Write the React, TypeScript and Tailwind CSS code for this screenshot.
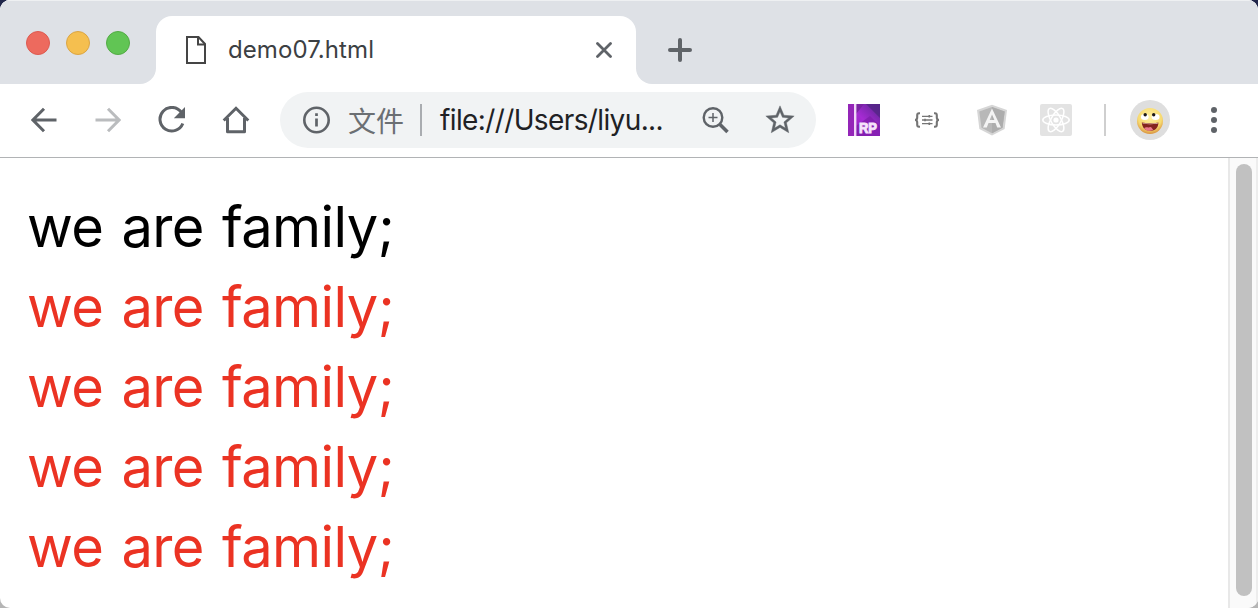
import type { ReactNode } from "react";

const INK = "#5f6368";

function Icon({ w, h, children }: { w: number; h: number; children: ReactNode }) {
  return (
    <svg width={w} height={h} viewBox={`0 0 ${w} ${h}`} fill="none" className="block shrink-0">
      {children}
    </svg>
  );
}

function TabStrip() {
  return (
    <div className="flex h-[84px] bg-white">
      <div className="flex w-[156px] items-start gap-4 rounded-br-2xl border-t border-[#eef0f2] bg-[#dee1e6] pt-[30px] pl-[26px]">
        <div className="size-6 rounded-full border border-[#dd5a50] bg-[#ed6a5e]" />
        <div className="size-6 rounded-full border border-[#dba544] bg-[#f5bf4f]" />
        <div className="size-6 rounded-full border border-[#53ab45] bg-[#61c554]" />
      </div>
      <div className="w-[480px] border-t border-[#eef0f2] bg-[#dee1e6] pt-[15px]">
        <div className="flex h-[68px] items-center rounded-t-2xl bg-white pl-[30px]">
          <Icon w={20} h={28}>
            <path d="M1 1H12.5L19 8V27H1Z" stroke="#454545" strokeWidth="2" />
            <path d="M12 1V8.5H19" stroke="#454545" strokeWidth="2" />
          </Icon>
          <span className="ml-[22px] w-[368px] font-[Inter,sans-serif] text-[24px] leading-[30px] tracking-[0.08px] text-[#3c4043]">
            demo07.html
          </span>
          <Icon w={16} h={16}>
            <path d="M1.5 1.5L14.5 14.5M14.5 1.5L1.5 14.5" stroke={INK} strokeWidth="2.8" strokeLinecap="round" />
          </Icon>
        </div>
      </div>
      <div className="flex-1 rounded-bl-2xl border-t border-[#eef0f2] bg-[#dee1e6] pt-[37px] pl-8">
        <Icon w={24} h={24}>
          <path d="M12 2V22M2 12H22" stroke={INK} strokeWidth="4" strokeLinecap="round" />
        </Icon>
      </div>
    </div>
  );
}

function AddressBar() {
  return (
    <div className="ml-[30px] flex h-14 w-[536px] items-center rounded-full bg-[#f1f3f4] pl-[23px]">
      <Icon w={27} h={28}>
        <circle cx="13.5" cy="14" r="12.2" stroke={INK} strokeWidth="2.6" />
        <path d="M13.5 7.3V10M13.5 12.5V20.5" stroke={INK} strokeWidth="2.7" />
      </Icon>
      <span className="ml-[18px] w-[72px] font-['Noto_Sans_CJK_SC',sans-serif] text-[28px] leading-[40px] font-normal text-[#6b6f73]">
        文件
      </span>
      <div className="h-8 w-0.5 bg-[#a9acb0]" />
      <span className="ml-[18px] w-[262px] font-[Inter,sans-serif] text-[28px] leading-[36px] tracking-[-0.62px] whitespace-nowrap text-[#202124]">
        file:///Users/liyu...
      </span>
      <Icon w={28} h={28}>
        <circle cx="11" cy="11.5" r="9.3" stroke={INK} strokeWidth="2.4" />
        <path d="M11 7V16M6.5 11.5H15.5" stroke={INK} strokeWidth="1.5" />
        <path d="M18 18.5L25.5 26" stroke={INK} strokeWidth="3.6" />
      </Icon>
      <svg width="34" height="34" viewBox="0 0 24 24" className="ml-[33px] block shrink-0" fill={INK} stroke={INK} strokeWidth=".3">
        <path d="M22 9.24l-7.19-.62L12 2 9.19 8.63 2 9.24l5.46 4.73L5.82 21 12 17.27 18.18 21l-1.63-7.03L22 9.24zM12 15.4l-3.76 2.27 1-4.28-3.32-2.88 4.38-.38L12 6.1l1.71 4.04 4.38.38-3.32 2.88 1 4.28L12 15.4z" />
      </svg>
    </div>
  );
}

function RpIcon() {
  return (
    <svg width="32" height="32" viewBox="0 0 32 32" className="ml-8 block shrink-0">
      <defs>
        <linearGradient id="cover" x1="0" y1="1" x2="1" y2="0">
          <stop offset="0" stopColor="#8a1cb0" />
          <stop offset=".5" stopColor="#a52bd3" />
          <stop offset="1" stopColor="#5a2590" />
        </linearGradient>
      </defs>
      <path d="M0 0H32V32H0Z" fill="url(#cover)" />
      <path d="M18 0H32V14Z" fill="#522684" opacity=".8" />
      <path d="M8 0H16L8 10Z" fill="#7a23a3" />
      <path d="M8 22L22 12L32 22V32H8Z" fill="#7d1eaa" opacity=".75" />
      <path d="M0 0H6V32H0Z" fill="#9425b8" />
      <path d="M6 0H8.4V32H6Z" fill="#f0d5f8" />
      <text x="11" y="28.5" fontFamily="Liberation Sans" fontWeight="bold" fontSize="14" textLength="18" lengthAdjust="spacingAndGlyphs" fill="#f8e8fd" stroke="#f5e0fb" strokeWidth="1">
        RP
      </text>
    </svg>
  );
}

function BracesIcon() {
  return (
    <svg width="26" height="16" viewBox="0 0 26 16" fill="none" stroke="#757575" className="ml-[34px] block shrink-0">
      <path d="M6 1.2H5C3.6 1.2 3.2 2 3.2 3.2V5.5C3.2 7 2.5 8 1 8C2.5 8 3.2 9 3.2 10.5V12.8C3.2 14 3.6 14.8 5 14.8H6" strokeWidth="2.1" />
      <path d="M20 1.2H21C22.4 1.2 22.8 2 22.8 3.2V5.5C22.8 7 23.5 8 25 8C23.5 8 22.8 9 22.8 10.5V12.8C22.8 14 22.4 14.8 21 14.8H20" strokeWidth="2.1" />
      <path d="M8 4.3H18.5M8 8H18.5M8 11.7H18.5" strokeWidth="1.3" />
      <path d="M15.3 3V5.6M11 6.7V9.3M15.3 10.4V13" strokeWidth="1.6" />
    </svg>
  );
}

function AngularIcon() {
  return (
    <svg width="32" height="32" viewBox="0 0 32 32" className="ml-9 block shrink-0">
      <path d="M16 .8L31 6L28.6 25L16 31.5L3.4 25L1 6Z" fill="#d6d6d6" />
      <path d="M16 3L28.7 7.4L26.5 23.8L16 29.3L5.5 23.8L3.3 7.4Z" fill="#b8b8b8" />
      <path d="M16 3L28.7 7.4L26.5 23.8L16 29.3Z" fill="#adadad" />
      <path d="M16 4.5L7 23.5H10.8L12.5 19H19.5L21.2 23.5H25ZM16 10.5L18.4 16H13.7Z" fill="#f4f4f4" fillRule="evenodd" />
    </svg>
  );
}

function ReactIcon() {
  return (
    <svg width="32" height="32" viewBox="0 0 32 32" fill="none" className="ml-8 block shrink-0">
      <rect width="32" height="32" rx="2" fill="#e3e3e3" />
      <g stroke="#fff" strokeWidth="1.5">
        <ellipse cx="16" cy="16" rx="13.2" ry="5" />
        <ellipse cx="16" cy="16" rx="13.2" ry="5" transform="rotate(60 16 16)" />
        <ellipse cx="16" cy="16" rx="13.2" ry="5" transform="rotate(120 16 16)" />
      </g>
      <circle cx="16" cy="16" r="2.6" fill="#fff" />
    </svg>
  );
}

function Avatar() {
  return (
    <svg width="40" height="40" viewBox="0 0 40 40" className="ml-6 block shrink-0">
      <defs>
        <radialGradient id="face" cx=".5" cy=".35" r=".65">
          <stop offset="0" stopColor="#fff0a0" />
          <stop offset=".7" stopColor="#f7da70" />
          <stop offset="1" stopColor="#d99340" />
        </radialGradient>
      </defs>
      <circle cx="20" cy="20" r="20" fill="#dedede" />
      <circle cx="20" cy="21" r="13" fill="url(#face)" />
      <ellipse cx="14.8" cy="17" rx="3.9" ry="2.9" fill="#fff" />
      <ellipse cx="25.6" cy="17" rx="4" ry="2.9" fill="#fff" />
      <circle cx="15.2" cy="14.7" r="1.7" fill="#1d1717" />
      <circle cx="23.7" cy="14.7" r="1.7" fill="#1d1717" />
      <path d="M11.8 22.6C17 23.6 23 23.6 28.4 22.4C28.3 28 25 30.8 20.2 30.8C15.2 30.8 12.2 28 11.8 22.6Z" fill="#84241f" />
      <path d="M12.5 22.9C17.5 23.9 22.8 23.9 27.8 22.8V23.5C23 24.5 17.5 24.5 12.7 23.6Z" fill="#f6e6d8" />
      <path d="M14 28.2C16 26.4 18 28 19.5 27.2C21.5 26.5 22 28.5 23.3 30C20 31.6 16 30.8 14 28.2Z" fill="#e9788a" />
    </svg>
  );
}

function Toolbar() {
  return (
    <div className="flex h-[74px] items-center border-b border-[#b1b3b5] bg-white pb-px pl-[31px]">
      <Icon w={26} h={26}>
        <path d="M25.5 13H2.5M13 1.8L1.9 13L13 24.2" stroke={INK} strokeWidth="3" />
      </Icon>
      <div className="ml-[38px]">
        <Icon w={26} h={26}>
          <path d="M.5 13H23.5M13 1.8L24.1 13L13 24.2" stroke="#babcbe" strokeWidth="3" />
        </Icon>
      </div>
      <div className="ml-[37px]">
        <Icon w={28} h={28}>
          <path d="M23.3 6.2A11.8 11.8 0 1 0 24.8 17.5" stroke={INK} strokeWidth="3" />
          <path d="M27 1V12.3H15.8Z" fill={INK} />
        </Icon>
      </div>
      <div className="ml-9">
        <Icon w={28} h={28}>
          <path d="M1.7 14.5L14 2.3L26.3 14.5" stroke={INK} strokeWidth="3" />
          <path d="M5.5 12V25.7H22.5V12" stroke={INK} strokeWidth="3" strokeLinejoin="round" />
        </Icon>
      </div>
      <AddressBar />
      <RpIcon />
      <BracesIcon />
      <AngularIcon />
      <ReactIcon />
      <div className="ml-8 h-8 w-0.5 shrink-0 bg-[#cfcfcf]" />
      <Avatar />
      <div className="ml-[41px] flex flex-col gap-1">
        <div className="size-1.5 rounded-full bg-[#5f6368]" />
        <div className="size-1.5 rounded-full bg-[#5f6368]" />
        <div className="size-1.5 rounded-full bg-[#5f6368]" />
      </div>
    </div>
  );
}

const LINES = ["text-black", "text-[#eb3323]", "text-[#eb3323]", "text-[#eb3323]", "text-[#eb3323]"];

export default function App() {
  return (
    <div className="h-[608px] w-[1258px] overflow-hidden bg-linear-to-b from-[#20264a] from-5% to-[#b5b5b5] to-20%">
      <div className="flex h-full flex-col overflow-hidden rounded-[10px] bg-white">
        <TabStrip />
        <Toolbar />
        <div className="flex flex-1">
          <div className="flex-1 pt-[29px] pl-[27px]">
            {LINES.map((color, i) => (
              <div
                key={i}
                className={`h-20 font-[Inter,sans-serif] text-[56px] leading-[80px] tracking-[-0.6px] [word-spacing:3px] whitespace-nowrap ${color}`}
              >
                we are family;
              </div>
            ))}
          </div>
          <div className="flex w-[30px] border-r-2 border-l-2 border-r-[#ededed] border-l-[#e8e8e8] bg-[#fafafa] pt-1.5 pl-1.5">
            <div className="h-[432px] w-4 rounded-full bg-[#c1c1c1]" />
          </div>
        </div>
      </div>
    </div>
  );
}
